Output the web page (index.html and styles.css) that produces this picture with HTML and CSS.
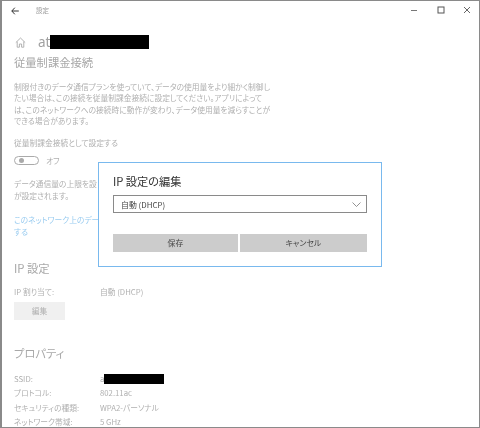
FILE: index.html
```html
<!DOCTYPE html>
<html lang="ja">
<head>
  <meta charset="UTF-8">
  <title>設定</title>
  <link rel="stylesheet" href="styles.css">
</head>
<body>
  <div class="window">
    <div class="titlebar">
      <svg class="back" width="8" height="8" viewBox="0 0 8 8"><path d="M3.8 .7 .8 4l3 3.3M.8 4h7" fill="none" stroke="#333" stroke-width="1"/></svg>
      <span class="app-name">設定</span>
      <div class="controls">
        <svg width="8" height="8" viewBox="0 0 8 8"><path d="M1 4.5h6" stroke="#777" stroke-width="1"/></svg>
        <svg width="8" height="8" viewBox="0 0 8 8"><rect x="1" y="1" width="6" height="6" fill="none" stroke="#555" stroke-width="1"/></svg>
        <svg width="8" height="8" viewBox="0 0 8 8"><path d="M1 1l6 6M7 1l-6 6" stroke="#555" stroke-width=".9"/></svg>
      </div>
    </div>

    <div class="content">
      <div class="network">
        <svg class="home" width="11" height="11" viewBox="0 0 11 11"><path d="M.8 5.6 5.5 1l4.7 4.6M2.2 4.6v5.6h2.2V7h2.2v3.2h2.2V4.6" fill="none" stroke="#aaa" stroke-width=".9"/></svg>
        <span class="network-name">at<span class="mask mask-name"></span></span>
      </div>
      <h2 class="heading first">従量制課金接続</h2>
      <p class="text intro">制限付きのデータ通信プランを使っていて、データの使用量をより細かく制御し<br>たい場合は、この接続を従量制課金接続に設定してください。アプリによって<br>は、このネットワークへの接続時に動作が変わり、データ使用量を減らすことが<br>できる場合があります。</p>
      <p class="text metered">従量制課金接続として設定する</p>
      <div class="toggle-row">
        <span class="toggle"><span class="knob"></span></span>
        <span class="text">オフ</span>
      </div>
      <p class="text limit">データ通信量の上限を設<br>が設定されます。</p>
      <p class="text link">このネットワーク上のデータ<br>する</p>
      <h2 class="heading ip">IP 設定</h2>
      <div class="row ip-row"><span class="label">IP 割り当て:</span><span>自動 (DHCP)</span></div>
      <div class="edit-btn">編集</div>
      <h2 class="heading props">プロパティ</h2>
      <div class="row first-prop"><span class="label">SSID:</span><span>a<span class="mask mask-ssid"></span></span></div>
      <div class="row"><span class="label">プロトコル:</span><span>802.11ac</span></div>
      <div class="row"><span class="label">セキュリティの種類:</span><span>WPA2-パーソナル</span></div>
      <div class="row"><span class="label">ネットワーク帯域:</span><span>5 GHz</span></div>
    </div>

    <div class="dialog">
      <div class="dialog-title">IP 設定の編集</div>
      <div class="select">
        <span>自動 (DHCP)</span>
        <svg width="9" height="5" viewBox="0 0 9 5"><path d="M.5 .5l4 4 4-4" fill="none" stroke="#777" stroke-width=".8"/></svg>
      </div>
      <div class="dialog-buttons">
        <div class="dialog-btn save">保存</div>
        <div class="dialog-btn cancel">キャンセル</div>
      </div>
    </div>
  </div>
</body>
</html>
```
FILE: styles.css
```css
* {
  box-sizing: border-box;
}

html, body {
  margin: 0;
  height: 100%;
}

body {
  font-family: "Noto Sans CJK JP", "Noto Sans", sans-serif;
  font-feature-settings: "palt";
  background: #fff;
  overflow: hidden;
}

.window {
  position: relative;
  width: 480px;
  height: 428px;
  background: #fff;
  border: 1px solid #8a8a8a;
  border-width: 1px 1px 1px 2px;
  overflow: hidden;
  filter: blur(0.35px);
}

.titlebar {
  display: flex;
  align-items: center;
  height: 18px;
  padding-left: 9px;
}

.back {
  margin-top: 1px;
}

.app-name {
  margin-left: 17px;
  font-size: 6.5px;
  color: #999;
}

.controls {
  display: flex;
  gap: 18.5px;
  margin-left: auto;
  margin-right: 8px;
}

.content {
  padding: 15px 0 0 12px;
  font-size: 7.75px;
  color: #b0b0b0;
}

.network {
  display: flex;
  align-items: center;
  height: 16px;
}

.home {
  margin-left: 1px;
}

.network-name {
  display: flex;
  align-items: center;
  margin-left: 12px;
  font-family: "Noto Sans", sans-serif;
  font-size: 13.5px;
  line-height: 16px;
  color: #a0a0a0;
}

.mask {
  display: inline-block;
  background: #000;
}

.mask-name {
  width: 99px;
  height: 14px;
}

.mask-ssid {
  width: 60px;
  height: 10px;
  vertical-align: middle;
}

.heading {
  margin: 0;
  font-size: 11.3px;
  font-weight: 400;
  line-height: 16px;
  color: #a8a8a8;
}

.heading.first {
  margin-top: 4px;
}

.text {
  margin: 0;
  line-height: 11.4px;
  white-space: nowrap;
}

.intro {
  margin-top: 11px;
}

.metered {
  margin-top: 10px;
}

.toggle-row {
  display: flex;
  align-items: center;
  gap: 7px;
  margin-top: 7px;
}

.toggle {
  display: flex;
  align-items: center;
  width: 25px;
  height: 9px;
  padding-left: 4px;
  border: 1px solid #aaa;
  border-radius: 5px;
}

.knob {
  width: 5px;
  height: 5px;
  border-radius: 50%;
  background: #aaa;
}

.limit {
  margin-top: 12px;
}

.link {
  margin-top: 13px;
  color: #9accf0;
}

.heading.ip {
  margin-top: 23px;
}

.row {
  display: flex;
  height: 14.5px;
  line-height: 14.5px;
  white-space: nowrap;
}

.label {
  width: 86px;
}

.ip-row {
  margin-top: 9px;
}

.edit-btn {
  width: 51px;
  height: 18px;
  margin-top: 2px;
  background: #f0f0f0;
  text-align: center;
  line-height: 18px;
}

.heading.props {
  margin-top: 25px;
}

.first-prop {
  margin-top: 11px;
}

.dialog {
  position: absolute;
  left: 96px;
  top: 161px;
  width: 284px;
  height: 105px;
  padding: 10px 14px 0;
  background: #fff;
  border: 1px solid #79b9ee;
}

.dialog-title {
  font-size: 11.2px;
  line-height: 16px;
  color: #333;
}

.select {
  display: flex;
  align-items: center;
  justify-content: space-between;
  height: 18px;
  margin-top: 6px;
  padding: 0 5px 0 7px;
  border: 1px solid #8a8a8a;
  font-size: 7.9px;
  color: #444;
}

.dialog-buttons {
  display: flex;
  gap: 2px;
  margin-top: 21px;
}

.dialog-btn {
  height: 18px;
  background: #ccc;
  text-align: center;
  font-size: 7.9px;
  line-height: 18px;
  color: #444;
}

.save {
  width: 125px;
}

.cancel {
  width: 127px;
}
```
